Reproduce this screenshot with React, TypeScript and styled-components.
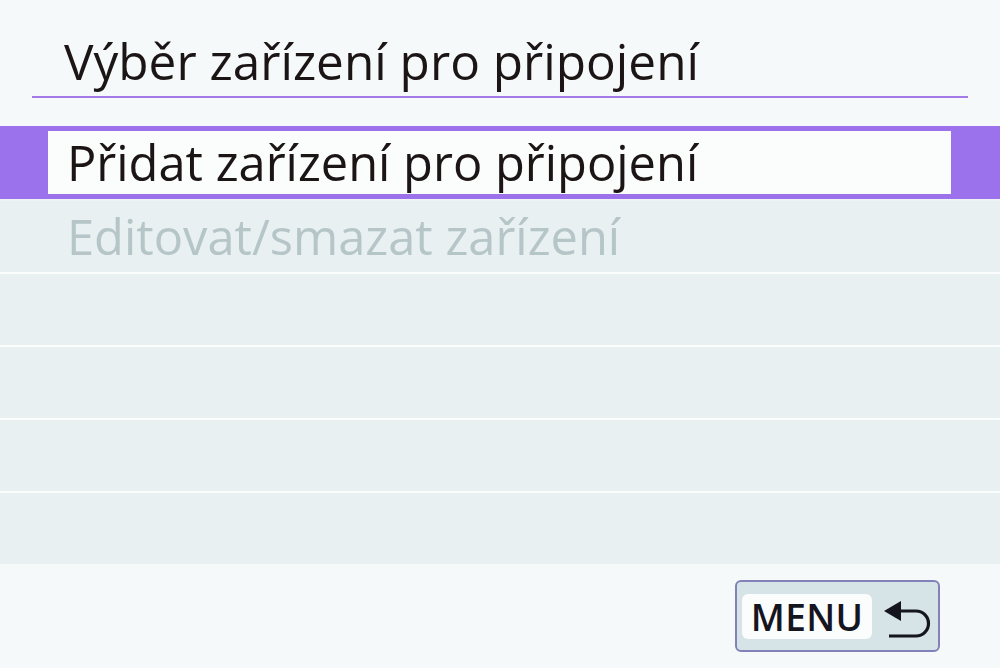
import styled, { createGlobalStyle } from "styled-components";

const GlobalStyle = createGlobalStyle`
  html, body {
    margin: 0;
    padding: 0;
    background: #f6f9f9;
  }
  body {
    font-family: 'Open Sans', 'Noto Sans', sans-serif;
  }
`;

const items = [
  { label: "Přidat zařízení pro připojení", selected: true, disabled: false },
  { label: "Editovat/smazat zařízení", selected: false, disabled: true },
  { label: "", selected: false, disabled: false },
  { label: "", selected: false, disabled: false },
  { label: "", selected: false, disabled: false },
  { label: "", selected: false, disabled: false },
];

const App = () => {
  return (
    <Screen>
      <GlobalStyle />
      <Header>
        <Title>Výběr zařízení pro připojení</Title>
        <Divider />
      </Header>
      <MenuList>
        {items.map((item, index) =>
          item.selected ? (
            <SelectedRow key={index}>
              <SelectedInner>{item.label}</SelectedInner>
            </SelectedRow>
          ) : (
            <Row key={index} $disabled={item.disabled} $first={index === 1}>
              {item.label}
            </Row>
          )
        )}
      </MenuList>
      <Footer>
        <MenuButton>
          <MenuLabel>MENU</MenuLabel>
          <BackIcon viewBox="0 0 52 42">
            <polygon points="1,12 18,2 18,22" fill="#15151f" />
            <path
              d="M16 12 H33 A12.5 12.5 0 0 1 33 37 H6"
              fill="none"
              stroke="#15151f"
              strokeWidth="3.2"
            />
          </BackIcon>
        </MenuButton>
      </Footer>
    </Screen>
  );
};

export default App;

const Screen = styled.div`
  width: 1000px;
  height: 668px;
  display: flex;
  flex-direction: column;
  background: #f6f9f9;
  overflow: hidden;
`;

const Header = styled.div`
  padding-top: 28px;
  display: flex;
  flex-direction: column;
`;

const Title = styled.h1`
  margin: 0 0 0 64px;
  font-family: 'Open Sans', 'Noto Sans', sans-serif;
  font-weight: 400;
  font-size: 49.5px;
  line-height: 66px;
  color: #1c1515;
`;

const Divider = styled.div`
  height: 2px;
  margin: 2px 32px 0 32px;
  background: #a47be6;
`;

const MenuList = styled.div`
  margin-top: 28px;
  display: flex;
  flex-direction: column;
`;

const SelectedRow = styled.div`
  height: 73px;
  box-sizing: border-box;
  padding: 5px 49px 5px 48px;
  background: #9c72ec;
`;

const SelectedInner = styled.div`
  height: 63px;
  padding-left: 19px;
  background: #fbfcfc;
  font-size: 48.8px;
  line-height: 62px;
  color: #1c1515;
  white-space: nowrap;
`;

const Row = styled.div<{ $disabled: boolean; $first: boolean }>`
  height: 73px;
  box-sizing: border-box;
  padding-left: 67px;
  background: #e8f0f1;
  border-top: 2px solid ${(p) => (p.$first ? "#eef4f4" : "#fbfdfd")};
  font-size: 48.8px;
  line-height: 70px;
  color: ${(p) => (p.$disabled ? "#b6c6c8" : "#1c1515")};
  white-space: nowrap;
`;

const Footer = styled.div`
  display: flex;
  justify-content: flex-end;
  padding: 16px 60px 0 0;
`;

const MenuButton = styled.div`
  width: 205px;
  height: 72px;
  box-sizing: border-box;
  border: 2px solid #8282b8;
  border-radius: 6px;
  background: #d6e3e7;
  display: flex;
  align-items: center;
  padding: 0 0 0 5px;
  gap: 11px;
`;

const MenuLabel = styled.div`
  width: 130px;
  height: 45px;
  border-radius: 6px;
  background: #fbfcfc;
  display: flex;
  align-items: center;
  justify-content: center;
  font-family: 'Open Sans', 'Noto Sans', sans-serif;
  font-weight: 600;
  font-size: 37px;
  line-height: 45px;
  color: #15151f;
  letter-spacing: 0.3px;
`;

const BackIcon = styled.svg`
  width: 52px;
  height: 42px;
  margin-top: 8px;
`;
